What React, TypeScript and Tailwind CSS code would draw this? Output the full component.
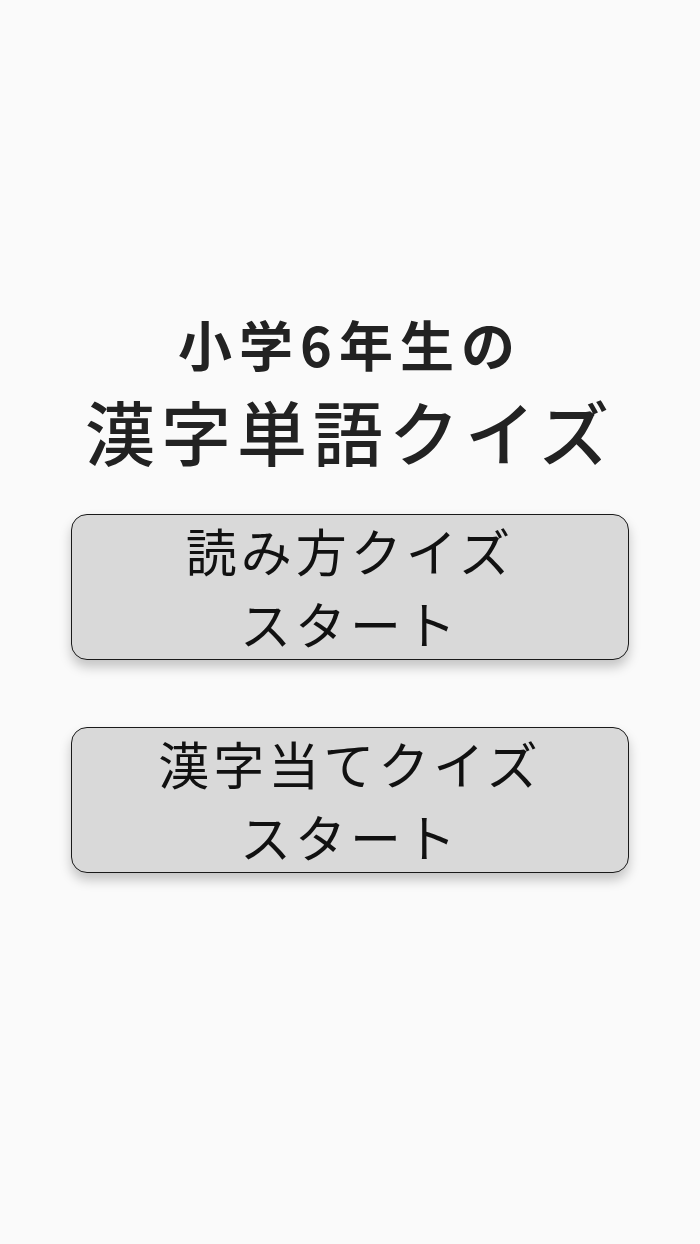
const font = { fontFamily: '"Noto Sans CJK JP", "Noto Sans", sans-serif' }

function StartButton({ label }: { label: string }) {
  return (
    <button
      type="button"
      className="w-[558px] h-[146px] rounded-[16px] border-[1.5px] border-[#1a1a1a] bg-[#d9d9d9] shadow-[0_7px_12px_rgba(0,0,0,0.22)] flex flex-col items-center justify-center text-[51px] leading-[73px] tracking-[4px] text-[#111] font-normal"
    >
      <span>{label}</span>
      <span>スタート</span>
    </button>
  )
}

export default function App() {
  return (
    <div className="min-h-[1244px] bg-[#fafafa] flex flex-col items-center" style={font}>
      <div className="pt-[309px] flex flex-col items-center text-[#222]">
        <h2 className="text-[54px] leading-[70px] font-bold tracking-[7px]">小学6年生の</h2>
        <h1 className="text-[70px] leading-[104px] font-medium tracking-[6px]">漢字単語クイズ</h1>
      </div>
      <div className="mt-[31px] flex flex-col gap-[67px]">
        <StartButton label="読み方クイズ" />
        <StartButton label="漢字当てクイズ" />
      </div>
    </div>
  )
}
